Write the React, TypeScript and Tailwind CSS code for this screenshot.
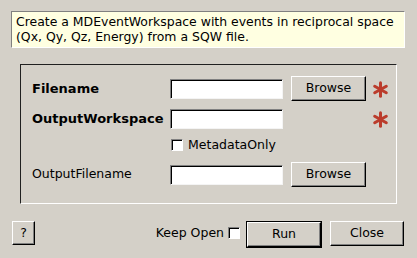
const FONT = "font-['DejaVu_Sans',sans-serif]";

function Asterisk() {
  return (
    <svg width="17" height="17" viewBox="0 0 17 17">
      <g stroke="#bb3c2c" strokeWidth="3" strokeLinecap="round">
        <line x1="8.5" y1="1.8" x2="8.5" y2="15.2" />
        <line x1="2.7" y1="5.2" x2="14.3" y2="11.8" />
        <line x1="2.7" y1="11.8" x2="14.3" y2="5.2" />
      </g>
    </svg>
  );
}

function Btn({ label, w = "w-[75px]", h = "h-[25px]" }: { label: string; w?: string; h?: string }) {
  return (
    <div
      className={`${w} ${h} shrink-0 flex items-center justify-center border border-t-white border-l-white border-b-black border-r-black bg-[#d4d0c8] shadow-[inset_-1px_-1px_0_#808080] text-[12.5px] text-black`}
    >
      {label}
    </div>
  );
}

function Field() {
  return (
    <div className="w-[113px] h-[20px] shrink-0 bg-white border border-t-[#808080] border-l-[#808080] border-b-[#f4f4f4] border-r-[#f4f4f4] shadow-[inset_1px_1px_0_#000]" />
  );
}

function Check() {
  return (
    <div className="w-[12px] h-[12px] shrink-0 bg-white border border-t-[#808080] border-l-[#808080] border-b-white border-r-white shadow-[inset_1px_1px_0_#000]" />
  );
}

export default function App() {
  return (
    <div className={`w-[417px] h-[258px] bg-[#d4d0c8] flex flex-col text-black ${FONT}`}>
      <div className="mt-[11px] ml-[11px] w-[394px] h-[37px] bg-[#ffffe1] border border-t-[#808080] border-l-[#808080] border-b-white border-r-white pl-[4px] pt-[2px] text-[12.45px] leading-[15px] whitespace-nowrap">
        Create a MDEventWorkspace with events in reciprocal space
        <br />
        (Qx, Qy, Qz, Energy) from a SQW file.
      </div>

      <div className="mt-[16px] ml-[20px] w-[377px] h-[140px] border border-t-[#202020] border-l-[#202020] border-b-white border-r-white pl-[11px] pt-[11px] flex flex-col text-[12.5px]">
        <div className="h-[25px] flex items-center">
          <div className="w-[138px] font-bold text-[13px]">Filename</div>
          <Field />
          <div className="ml-[8px]">
            <Btn label="Browse" />
          </div>
          <div className="ml-[6px] mt-[2px]">
            <Asterisk />
          </div>
        </div>
        <div className="mt-[5px] h-[25px] flex items-center">
          <div className="w-[138px] font-bold text-[13px]">OutputWorkspace</div>
          <Field />
          <div className="ml-[8px] w-[75px]" />
          <div className="ml-[6px] mt-[1px]">
            <Asterisk />
          </div>
        </div>
        <div className="mt-[1px] h-[26px] flex items-center">
          <div className="w-[139px]" />
          <Check />
          <span className="ml-[5px]">MetadataOnly</span>
        </div>
        <div className="mt-[4px] h-[25px] flex items-center">
          <div className="w-[138px]">OutputFilename</div>
          <Field />
          <div className="ml-[8px]">
            <Btn label="Browse" />
          </div>
        </div>
      </div>

      <div className="mt-[17px] flex items-start text-[12.5px]">
        <div className="ml-[12px]">
          <Btn label="?" w="w-[23px]" h="h-[24px]" />
        </div>
        <span className="ml-auto mt-[4px] leading-[15px]">Keep Open</span>
        <div className="ml-[4px] mt-[6px]">
          <Check />
        </div>
        <div className="ml-[6px] border border-black">
          <Btn label="Run" w="w-[74px]" />
        </div>
        <div className="ml-[8px] mr-[13px]">
          <Btn label="Close" w="w-[74px]" />
        </div>
      </div>
    </div>
  );
}
